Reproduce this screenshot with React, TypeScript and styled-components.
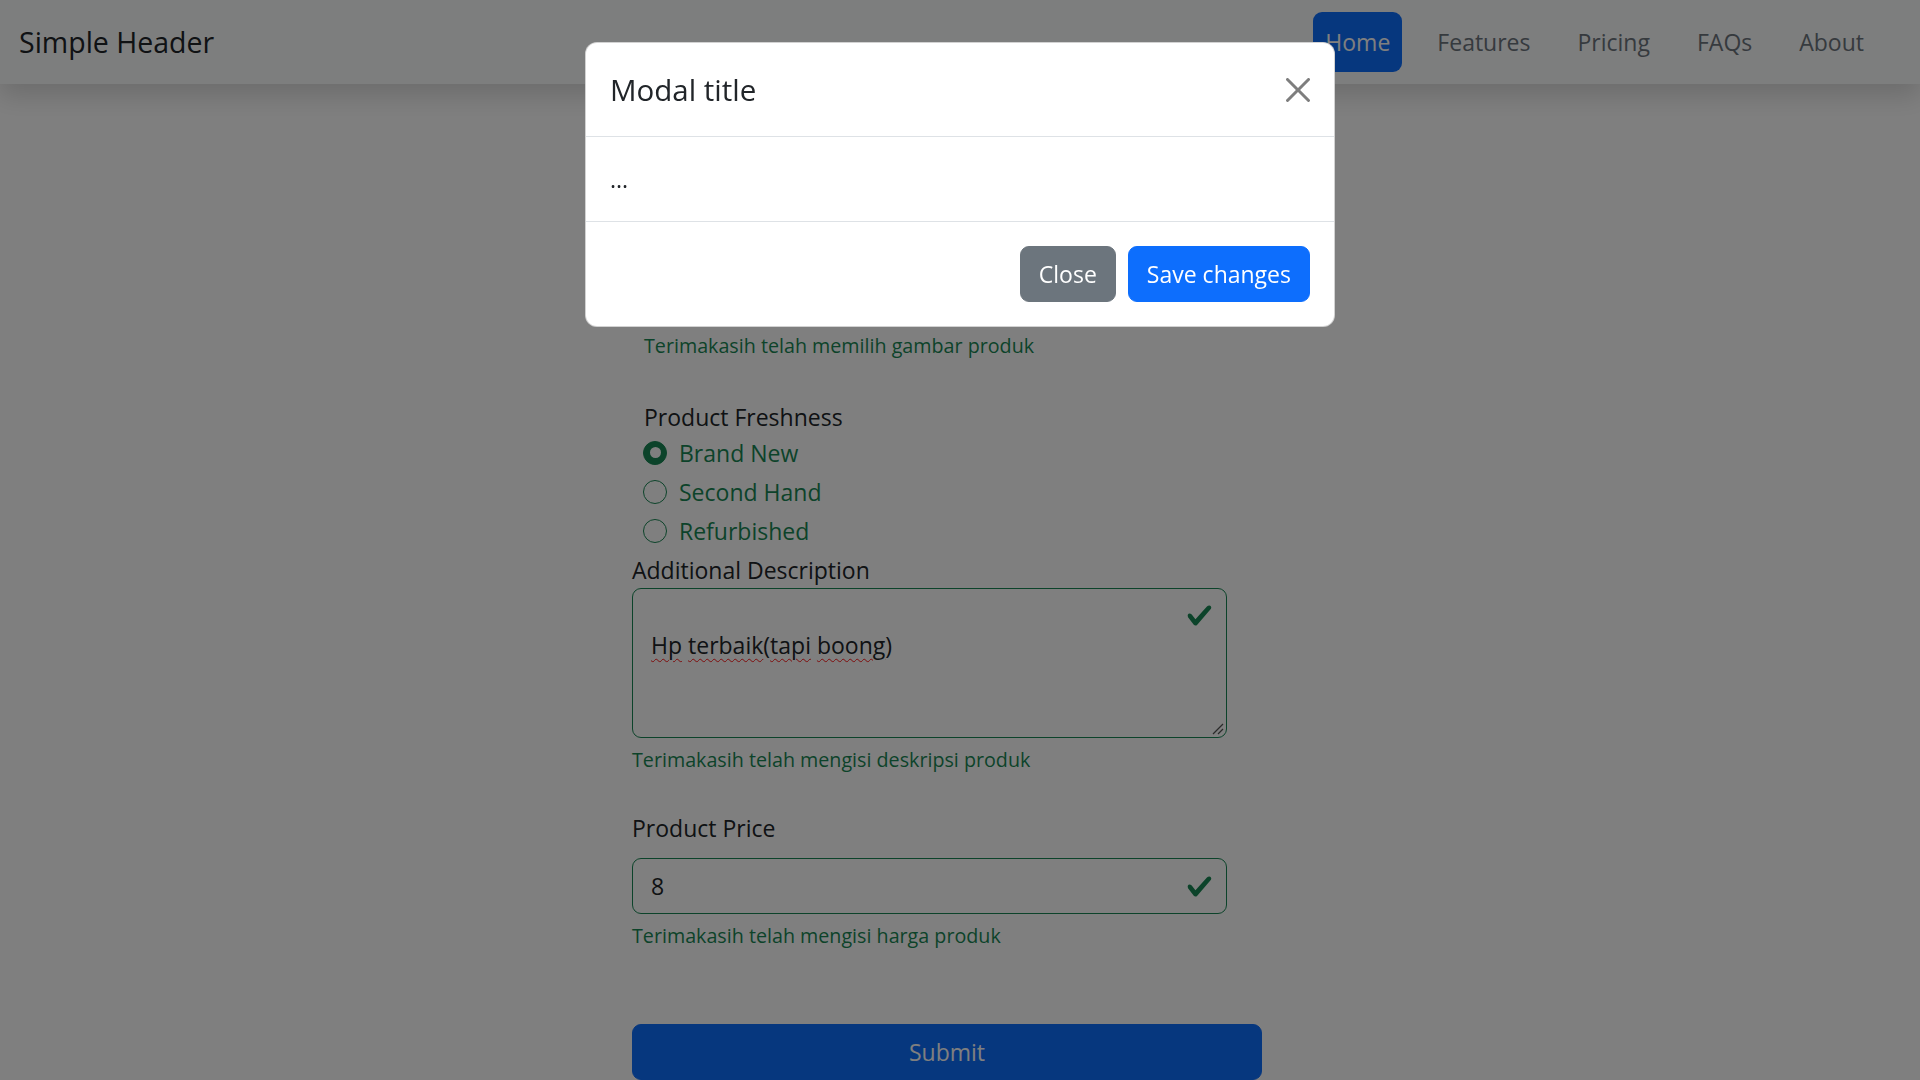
import React from "react";
import styled, { createGlobalStyle } from "styled-components";

const GlobalStyle = createGlobalStyle`
  html, body { margin: 0; padding: 0; }
  body {
    font-family: "Open Sans", "Noto Sans", "Liberation Sans", sans-serif;
    color: #212529;
    background: #ffffff;
    overflow: hidden;
  }
  *, *::before, *::after { box-sizing: border-box; }
`;

const Page = styled.div`
  min-height: 1080px;
`;

const Header = styled.header`
  position: relative;
  z-index: 2;
  height: 84px;
  display: flex;
  align-items: center;
  justify-content: space-between;
  padding: 0 44px 0 19px;
  background: #fbfcfc;
  box-shadow: 0 12px 24px rgba(0, 0, 0, 0.15);
`;

const Brand = styled.span`
  font-size: 28.5px;
  line-height: 45px;
  color: #212529;
`;

const Nav = styled.nav`
  display: flex;
  gap: 23px;
`;

const NavLink = styled.a<{ $active?: boolean }>`
  display: block;
  padding: 12px;
  font-size: 23px;
  line-height: 36px;
  border-radius: 9px;
  text-decoration: none;
  color: ${(p) => (p.$active ? "#ffffff" : "#6c757d")};
  background: ${(p) => (p.$active ? "#0d6efd" : "transparent")};
`;

const Content = styled.div`
  padding-right: 26px;
`;

const Main = styled.main`
  width: 630px;
  margin: 0 auto;
  padding-top: 246px;
`;

const Indented = styled.div`
  padding-left: 12px;
`;

const Feedback = styled.div<{ $mt?: number }>`
  margin-top: ${(p) => p.$mt ?? 6}px;
  font-size: 19.7px;
  line-height: 31.5px;
  color: #198754;
`;

const Label = styled.label<{ $mt?: number; $mb?: number }>`
  display: block;
  margin-top: ${(p) => p.$mt ?? 0}px;
  margin-bottom: ${(p) => p.$mb ?? 0}px;
  font-size: 23px;
  line-height: 36px;
  color: #212529;
`;

const RadioRow = styled.label`
  display: flex;
  align-items: flex-start;
  gap: 12px;
  margin-bottom: 3px;
  margin-left: -1px;
  font-size: 23px;
  line-height: 36px;
  color: #198754;
`;

const RadioCircle = styled.span<{ $checked?: boolean }>`
  width: 24px;
  height: 24px;
  margin-top: 6px;
  flex-shrink: 0;
  border-radius: 50%;
  border: 1px solid #198754;
  background: ${(p) => (p.$checked ? "#198754" : "#ffffff")};
  display: flex;
  align-items: center;
  justify-content: center;
`;

const RadioDot = styled.span`
  width: 11px;
  height: 11px;
  border-radius: 50%;
  background: #ffffff;
`;

const FieldBox = styled.div<{ $multiline?: boolean }>`
  position: relative;
  display: flex;
  align-items: ${(p) => (p.$multiline ? "flex-start" : "center")};
  width: 595px;
  height: ${(p) => (p.$multiline ? 150 : 56)}px;
  padding: ${(p) => (p.$multiline ? "0 13px 0 18px" : "9px 13px 9px 18px")};
  border: 1px solid #198754;
  border-radius: 9px;
  background: #ffffff;
`;

const AreaText = styled.div`
  flex: 1;
  padding-top: 38px;
  font-size: 23px;
  line-height: 36px;
  color: #212529;
`;

const Misspelled = styled.span`
  text-decoration: underline wavy #ff1a1a;
  text-decoration-thickness: 1px;
  text-underline-offset: 4px;
`;

const TextInput = styled.input`
  flex: 1;
  height: 36px;
  padding: 0;
  border: none;
  outline: none;
  background: transparent;
  font-family: inherit;
  font-size: 23px;
  line-height: 36px;
  color: #212529;
`;

const CheckWrap = styled.span<{ $top?: boolean }>`
  display: flex;
  flex-shrink: 0;
  width: 27px;
  height: 27px;
  margin-top: ${(p) => (p.$top ? "13px" : "0")};
`;

const Grip = styled.svg`
  position: absolute;
  right: 2px;
  bottom: 2px;
`;

const SubmitButton = styled.button`
  display: block;
  width: 100%;
  height: 56px;
  margin-top: 72px;
  border: 1px solid #0d6efd;
  border-radius: 9px;
  background: #0d6efd;
  color: #ffffff;
  font-family: inherit;
  font-size: 23px;
  line-height: 36px;
`;

const Backdrop = styled.div`
  position: fixed;
  inset: 0;
  z-index: 1050;
  display: flex;
  justify-content: center;
  align-items: flex-start;
  padding-top: 42px;
  background: rgba(0, 0, 0, 0.5);
`;

const ModalContent = styled.div`
  width: 750px;
  background: #ffffff;
  border: 1px solid rgba(0, 0, 0, 0.175);
  border-radius: 12px;
`;

const ModalHeader = styled.div`
  display: flex;
  align-items: center;
  padding: 24px;
  border-bottom: 1px solid #dee2e6;
`;

const ModalTitle = styled.h1`
  margin: 0;
  font-size: 29.5px;
  line-height: 45px;
  font-weight: 500;
  color: #212529;
`;

const CloseX = styled.button`
  width: 36px;
  height: 36px;
  padding: 6px;
  margin: -12px -6px -12px auto;
  border: none;
  background: transparent;
  opacity: 0.5;
  display: flex;
  align-items: center;
  justify-content: center;
`;

const ModalBody = styled.div`
  padding: 24px;
  font-size: 23px;
  line-height: 36px;
`;

const ModalFooter = styled.div`
  display: flex;
  justify-content: flex-end;
  align-items: center;
  gap: 12px;
  padding: 24px;
  border-top: 1px solid #dee2e6;
`;

const Btn = styled.button<{ $variant: "primary" | "secondary" }>`
  height: 56px;
  padding: 9px 18px;
  border-radius: 9px;
  font-family: inherit;
  font-size: 23px;
  line-height: 36px;
  color: #ffffff;
  border: 1px solid ${(p) => (p.$variant === "primary" ? "#0d6efd" : "#6c757d")};
  background: ${(p) => (p.$variant === "primary" ? "#0d6efd" : "#6c757d")};
`;

const CheckIcon = () => (
  <svg width="27" height="27" viewBox="0 0 8 8">
    <path
      fill="#198754"
      d="M2.3 6.73.6 4.53c-.4-1.04.46-1.4 1.1-.8l1.1 1.4 3.4-3.8c.6-.63 1.6-.27 1.2.7l-4 4.6c-.43.5-.8.4-1.1.1z"
    />
  </svg>
);

const radios = [
  { label: "Brand New", checked: true },
  { label: "Second Hand", checked: false },
  { label: "Refurbished", checked: false },
];

const navItems = ["Home", "Features", "Pricing", "FAQs", "About"];

export default function App() {
  return (
    <>
      <GlobalStyle />
      <Page>
        <Header>
          <Brand>Simple Header</Brand>
          <Nav>
            {navItems.map((n, i) => (
              <NavLink key={n} href="#" $active={i === 0}>
                {n}
              </NavLink>
            ))}
          </Nav>
        </Header>
        <Content>
          <Main>
            <Indented>
              <Feedback $mt={0}>Terimakasih telah memilih gambar produk</Feedback>
              <Label $mt={37}>Product Freshness</Label>
              {radios.map((r) => (
                <RadioRow key={r.label}>
                  <RadioCircle $checked={r.checked}>{r.checked && <RadioDot />}</RadioCircle>
                  {r.label}
                </RadioRow>
              ))}
            </Indented>
            <Label>Additional Description</Label>
            <FieldBox $multiline role="textbox">
              <AreaText>
                <Misspelled>Hp</Misspelled> <Misspelled>terbaik</Misspelled>(<Misspelled>tapi</Misspelled>{" "}
                <Misspelled>boong</Misspelled>)
              </AreaText>
              <CheckWrap $top>
                <CheckIcon />
              </CheckWrap>
              <Grip width="12" height="12" viewBox="0 0 12 12">
                <line x1="1" y1="11" x2="11" y2="1" stroke="#555" strokeWidth="1.2" />
                <line x1="6" y1="11" x2="11" y2="6" stroke="#555" strokeWidth="1.2" />
              </Grip>
            </FieldBox>
            <Feedback>Terimakasih telah mengisi deskripsi produk</Feedback>
            <Label $mt={35} $mb={12}>
              Product Price
            </Label>
            <FieldBox>
              <TextInput value="8" readOnly />
              <CheckWrap>
                <CheckIcon />
              </CheckWrap>
            </FieldBox>
            <Feedback>Terimakasih telah mengisi harga produk</Feedback>
            <SubmitButton type="button">Submit</SubmitButton>
          </Main>
        </Content>
      </Page>
      <Backdrop>
        <ModalContent>
          <ModalHeader>
            <ModalTitle>Modal title</ModalTitle>
            <CloseX aria-label="Close">
              <svg width="24" height="24" viewBox="0 0 16 16">
                <path
                  fill="#000"
                  d="M.293.293a1 1 0 0 1 1.414 0L8 6.586 14.293.293a1 1 0 1 1 1.414 1.414L9.414 8l6.293 6.293a1 1 0 0 1-1.414 1.414L8 9.414l-6.293 6.293a1 1 0 0 1-1.414-1.414L6.586 8 .293 1.707a1 1 0 0 1 0-1.414z"
                />
              </svg>
            </CloseX>
          </ModalHeader>
          <ModalBody>...</ModalBody>
          <ModalFooter>
            <Btn $variant="secondary">Close</Btn>
            <Btn $variant="primary">Save changes</Btn>
          </ModalFooter>
        </ModalContent>
      </Backdrop>
    </>
  );
}
